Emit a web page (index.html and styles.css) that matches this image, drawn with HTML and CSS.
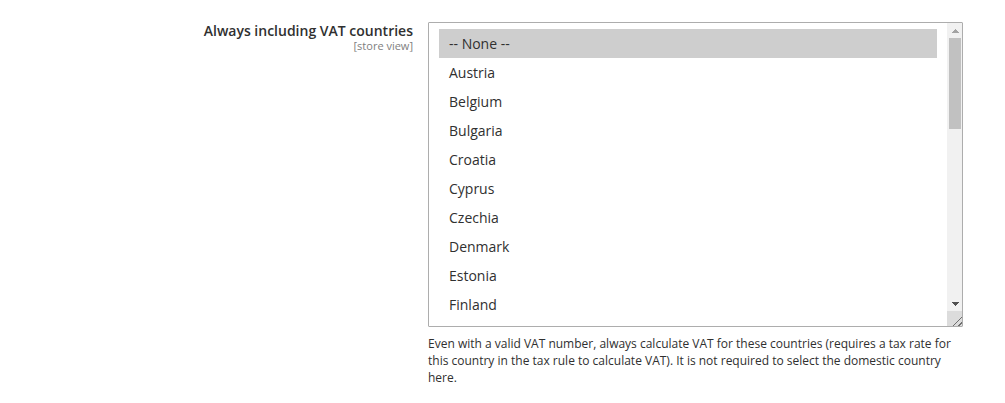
FILE: index.html
```html
<!DOCTYPE html>
<html>

<head>
	<meta charset="utf-8">
	<title>VAT countries</title>

	<link rel="stylesheet" href="styles.css">

</head>

<body>

	<div class="field">
		<div class="field-label">
			<span id="vat-label">Always including VAT countries</span>
			<span class="scope">[store view]</span>
		</div>

		<div class="field-control">
			<div class="multiselect">
				<!-- only the rows in view, the list is scrolled to the top -->
				<ul class="options" role="listbox" aria-multiselectable="true" aria-labelledby="vat-label">
					<li class="option selected" role="option" aria-selected="true">-- None --</li>
					<li class="option" role="option">Austria</li>
					<li class="option" role="option">Belgium</li>
					<li class="option" role="option">Bulgaria</li>
					<li class="option" role="option">Croatia</li>
					<li class="option" role="option">Cyprus</li>
					<li class="option" role="option">Czechia</li>
					<li class="option" role="option">Denmark</li>
					<li class="option" role="option">Estonia</li>
					<li class="option" role="option">Finland</li>
				</ul>

				<div class="scrollbar">
					<span class="scroll-btn up"></span>
					<div class="scroll-track">
						<div class="scroll-thumb"></div>
					</div>
					<span class="scroll-btn down"></span>
					<span class="resizer"></span>
				</div>
			</div>

			<p class="note">Even with a valid VAT number, always calculate VAT for these countries (requires a tax rate for
				this country in the tax rule to calculate VAT). It is not required to select the domestic country
				here.</p>
		</div>
	</div>

</body>

</html>
```

FILE: styles.css
```css
body {
	margin: 0;
	background-color: white;
	color: #303030;
	font-family: "Open Sans", "Liberation Sans", sans-serif;
}

.field {
	display: grid;
	grid-template-columns: 413px 535px;
	column-gap: 15px;
	padding-top: 22px;
}

.field-label {
	display: flex;
	flex-direction: column;
	align-items: flex-end;
	text-align: right;
	font-size: 14px;
	font-weight: 600;
	line-height: 18px;
}

.scope {
	font-size: 11px;
	font-weight: normal;
	line-height: 12px;
	color: #808080;
}

.multiselect {
	display: flex;
	box-sizing: border-box;
	height: 305px;
	border: 1px solid #adadad;
	border-radius: 1px;
	background-color: white;
	overflow: hidden;
}

.options {
	flex: 1;
	margin: 0;
	padding: 6px 10px;
	list-style: none;
	font-size: 14px;
	line-height: 19px;
}

.option {
	padding: 5px 10px;
	white-space: nowrap;
	cursor: default;
}

.option.selected {
	background-color: #cecece;
}

/* fake classic scrollbar, the real one is hidden in the shot */
.scrollbar {
	display: flex;
	flex-direction: column;
	width: 15px;
	background-color: #f1f1f1;
}

.scroll-btn {
	height: 15px;
	background-repeat: no-repeat;
	background-size: 8px 4px;
	background-position: center;
}

.scroll-btn.up {
	background-image: conic-gradient(from 135deg at 50% 0, #a3a3a3 90deg, transparent 0);
}

.scroll-btn.down {
	background-image: conic-gradient(from -45deg at 50% 100%, #505050 90deg, transparent 0);
}

.scroll-track {
	flex: 1;
	padding: 0 1px 0 2px;
}

.scroll-thumb {
	height: 91px;
	background-color: #c1c1c1;
}

.resizer {
	height: 15px;
	background-color: #dcdcdc;
	background-image: linear-gradient(to top left, transparent 2px, #6e6e6e 2px, #6e6e6e 3px, transparent 3px, transparent 6px, #6e6e6e 6px, #6e6e6e 7px, transparent 7px);
}

.note {
	margin: 9px 0 0;
	font-size: 12px;
	line-height: 16.8px;
}
```
